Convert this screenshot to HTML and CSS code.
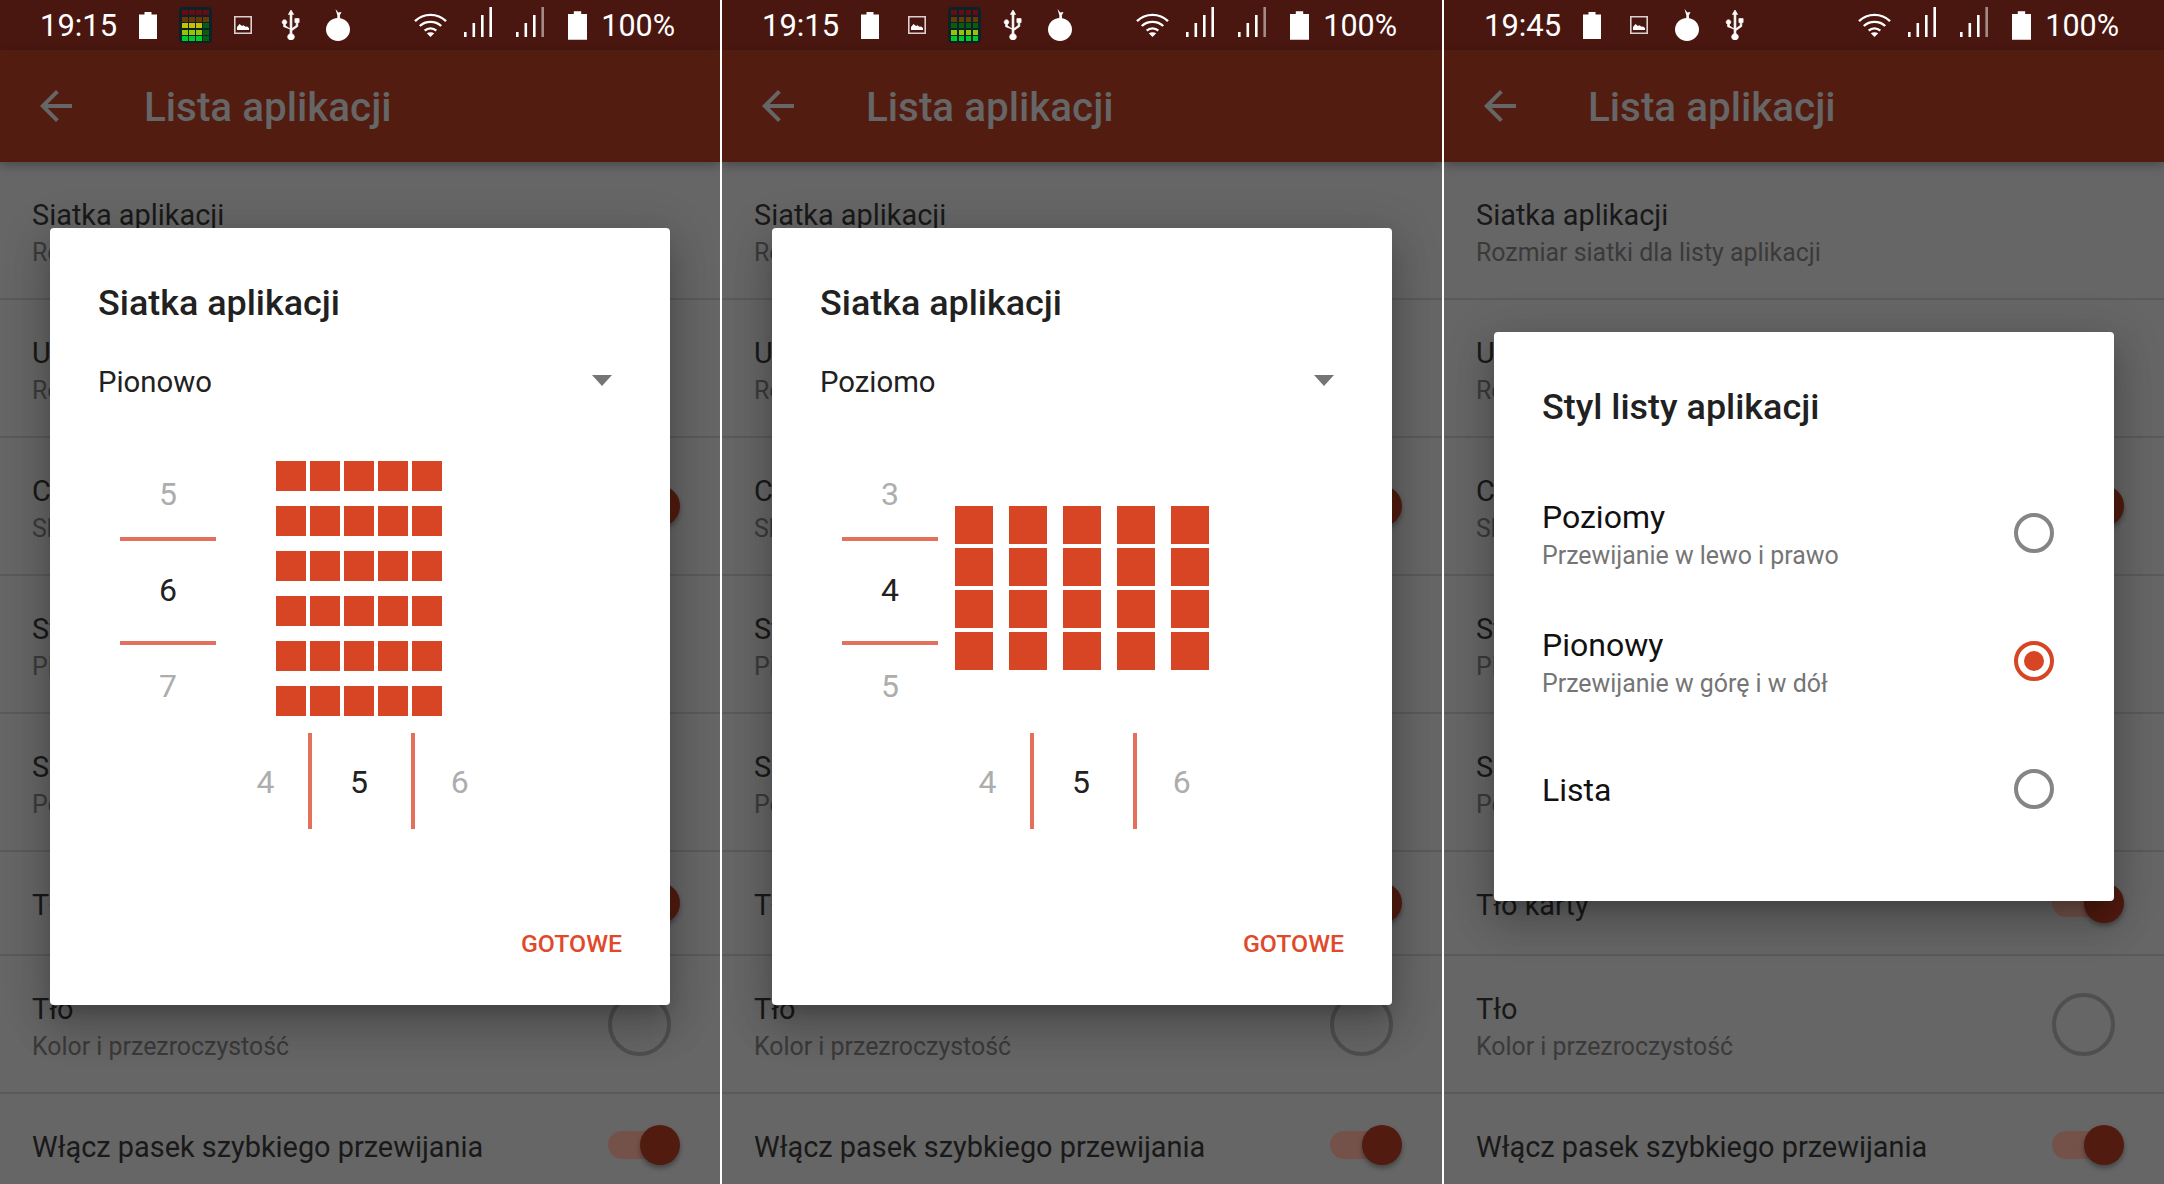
FILE: index.html
```html
<!doctype html>
<html lang="pl">
  <head>
    <meta charset="utf-8">
    <title>Lista aplikacji</title>
    <link rel="stylesheet" href="styles.css">
  </head>
  <body>
    <svg class="sprite" width="0" height="0" aria-hidden="true">
      <symbol id="i-battery" viewBox="0 0 18 27">
        <path d="M5.5 0h7v2.5H18V27H0V2.5h5.5z"/>
      </symbol>
      <symbol id="i-image" viewBox="0 0 18 18">
        <path opacity="0.8" fill-rule="evenodd" d="M0 0h18v18H0zM1.6 1.6v14.8h14.8V1.6z"/>
        <path d="M3 14v-3l2.5-3 2.500 2 1.500-.8 2 1.600 1.600-.4L15 12v2z"/>
      </symbol>
      <symbol id="i-usb" viewBox="0 0 20 30">
        <path d="M10 0l2.600 4.400h-1.700v14.200l4.300-3.100v-3h-1.300V8.600h4.200v3.900h-1.300v3.900l-5.900 4.200v3.100a3.300 3.300 0 1 1-1.800 0v-4.700L2.600 16.700v-2.500a2.300 2.300 0 1 1 1.800 0v1.600l4.700 3.200V4.400H7.400z"/>
      </symbol>
      <symbol id="i-fruit" viewBox="0 0 24 32">
        <path d="M12 9c7 0 12 5.400 12 11.600S18.600 32 12 32 0 26.800 0 20.600 5 9 12 9z"/>
        <path d="M9.500 0l2.800 3.600L15.500 3l-1.700 3.500.4 3h-3l.2-3z"/>
      </symbol>
      <symbol id="i-wifi" viewBox="0 0 33 24">
        <path fill="none" stroke="#fff" stroke-width="2.400" d="M1 8.200C9.500-.2 23.500-.2 32 8.200M5.800 13C11.500 7.500 21.500 7.500 27.200 13M10.700 17.600c3.200-3 8.400-3 11.600 0"/>
        <path d="M12.800 20.200c2-1.300 5.400-1.300 7.400 0l-3.700 3.800z"/>
      </symbol>
      <symbol id="i-signal" viewBox="0 0 28 30">
        <path d="M0 25h2.600v5H0zM8.500 16h2.600v14H8.500zM17 8h2.600v22H17z"/>
        <path d="M25.400 0H28v30h-2.600z"/>
      </symbol>
      <symbol id="i-signal-dim" viewBox="0 0 28 30">
        <path d="M0 25h2.600v5H0zM8.500 16h2.600v14H8.500zM17 8h2.600v22H17z"/>
        <path opacity="0.5" d="M25.400 0H28v30h-2.600z"/>
      </symbol>
      <symbol id="i-back" viewBox="0 0 24 24">
        <path d="M20 11H7.830l5.590-5.590L12 4l-8 8 8 8 1.410-1.410L7.830 13H20v-2z"/>
      </symbol>
    </svg>

    <section class="phone">
      <div class="status">
        <span class="clock">19:15</span>
        <div class="notifs">
          <span class="slot"><svg class="ic-battery"><use href="#i-battery"/></svg></span>
          <span class="slot">
            <span class="meter">
              <i class="m-red"></i><i class="m-red"></i><i class="m-red"></i><i class="m-red"></i>
              <i class="m-brown"></i><i class="m-brown"></i><i class="m-brown"></i><i class="m-brown"></i>
              <i class="m-yellow"></i><i class="m-yellow"></i><i class="m-yellow"></i><i class="m-dkgreen"></i>
              <i class="m-lime"></i><i class="m-lime"></i><i class="m-lime"></i><i class="m-dkgreen"></i>
              <i class="m-green"></i><i class="m-green"></i><i class="m-green"></i><i class="m-dkgreen"></i>
            </span>
          </span>
          <span class="slot"><svg class="ic-image"><use href="#i-image"/></svg></span>
          <span class="slot"><svg class="ic-usb"><use href="#i-usb"/></svg></span>
          <span class="slot"><svg class="ic-fruit"><use href="#i-fruit"/></svg></span>
        </div>
        <div class="system">
          <svg class="ic-wifi"><use href="#i-wifi"/></svg>
          <svg class="ic-signal"><use href="#i-signal"/></svg>
          <svg class="ic-signal"><use href="#i-signal-dim"/></svg>
          <svg class="ic-battery-sys"><use href="#i-battery"/></svg>
          <span class="level">100%</span>
        </div>
      </div>
      <header class="appbar">
        <svg class="ic-back"><use href="#i-back"/></svg>
        <h1>Lista aplikacji</h1>
      </header>
      <ul class="prefs">
        <li class="pref"><div class="pref-text"><b>Siatka aplikacji</b><small>Rozmiar siatki dla listy aplikacji</small></div></li>
        <li class="pref"><div class="pref-text"><b>Układ</b><small>Rozmiar</small></div></li>
        <li class="pref"><div class="pref-text"><b>Czcionka</b><small>Skala</small></div><span class="switch"></span></li>
        <li class="pref"><div class="pref-text"><b>Styl listy aplikacji</b><small>Pionowy</small></div></li>
        <li class="pref"><div class="pref-text"><b>Sortowanie</b><small>Po nazwie</small></div></li>
        <li class="pref pref-short"><div class="pref-text"><b>Tło karty</b></div><span class="switch"></span></li>
        <li class="pref"><div class="pref-text"><b>Tło</b><small>Kolor i przezroczystość</small></div><span class="swatch"></span></li>
        <li class="pref pref-short"><div class="pref-text"><b>Włącz pasek szybkiego przewijania</b></div><span class="switch"></span></li>
      </ul>

      <div class="dialog dialog-grid">
        <h2>Siatka aplikacji</h2>
        <div class="dropdown"><span>Pionowo</span><span class="caret"></span></div>
        <div class="editor">
          <div class="vpick">
            <span class="n-top dim">5</span>
            <span class="n-mid">6</span>
            <span class="n-bot dim">7</span>
          </div>
          <div class="preview">
            <div class="cells cells-portrait">
              <i></i><i></i><i></i><i></i><i></i>
              <i></i><i></i><i></i><i></i><i></i>
              <i></i><i></i><i></i><i></i><i></i>
              <i></i><i></i><i></i><i></i><i></i>
              <i></i><i></i><i></i><i></i><i></i>
              <i></i><i></i><i></i><i></i><i></i>
            </div>
          </div>
          <div class="hpick">
            <span class="h-left dim">4</span>
            <span class="h-mid">5</span>
            <span class="h-right dim">6</span>
          </div>
        </div>
        <div class="actions"><span>GOTOWE</span></div>
      </div>
    </section>

    <section class="phone">
      <div class="status">
        <span class="clock">19:15</span>
        <div class="notifs">
          <span class="slot"><svg class="ic-battery"><use href="#i-battery"/></svg></span>
          <span class="slot"><svg class="ic-image"><use href="#i-image"/></svg></span>
          <span class="slot">
            <span class="meter">
              <i class="m-red"></i><i class="m-red"></i><i class="m-red"></i><i class="m-red"></i>
              <i class="m-brown"></i><i class="m-brown"></i><i class="m-brown"></i><i class="m-brown"></i>
              <i class="m-dkgreen"></i><i class="m-dkgreen"></i><i class="m-dkgreen"></i><i class="m-dkgreen"></i>
              <i class="m-lime"></i><i class="m-lime"></i><i class="m-lime"></i><i class="m-lime"></i>
              <i class="m-green"></i><i class="m-green"></i><i class="m-green"></i><i class="m-green"></i>
            </span>
          </span>
          <span class="slot"><svg class="ic-usb"><use href="#i-usb"/></svg></span>
          <span class="slot"><svg class="ic-fruit"><use href="#i-fruit"/></svg></span>
        </div>
        <div class="system">
          <svg class="ic-wifi"><use href="#i-wifi"/></svg>
          <svg class="ic-signal"><use href="#i-signal"/></svg>
          <svg class="ic-signal"><use href="#i-signal-dim"/></svg>
          <svg class="ic-battery-sys"><use href="#i-battery"/></svg>
          <span class="level">100%</span>
        </div>
      </div>
      <header class="appbar">
        <svg class="ic-back"><use href="#i-back"/></svg>
        <h1>Lista aplikacji</h1>
      </header>
      <ul class="prefs">
        <li class="pref"><div class="pref-text"><b>Siatka aplikacji</b><small>Rozmiar siatki dla listy aplikacji</small></div></li>
        <li class="pref"><div class="pref-text"><b>Układ</b><small>Rozmiar</small></div></li>
        <li class="pref"><div class="pref-text"><b>Czcionka</b><small>Skala</small></div><span class="switch"></span></li>
        <li class="pref"><div class="pref-text"><b>Styl listy aplikacji</b><small>Pionowy</small></div></li>
        <li class="pref"><div class="pref-text"><b>Sortowanie</b><small>Po nazwie</small></div></li>
        <li class="pref pref-short"><div class="pref-text"><b>Tło karty</b></div><span class="switch"></span></li>
        <li class="pref"><div class="pref-text"><b>Tło</b><small>Kolor i przezroczystość</small></div><span class="swatch"></span></li>
        <li class="pref pref-short"><div class="pref-text"><b>Włącz pasek szybkiego przewijania</b></div><span class="switch"></span></li>
      </ul>

      <div class="dialog dialog-grid">
        <h2>Siatka aplikacji</h2>
        <div class="dropdown"><span>Poziomo</span><span class="caret"></span></div>
        <div class="editor">
          <div class="vpick">
            <span class="n-top dim">3</span>
            <span class="n-mid">4</span>
            <span class="n-bot dim">5</span>
          </div>
          <div class="preview">
            <div class="cells cells-landscape">
              <i></i><i></i><i></i><i></i><i></i>
              <i></i><i></i><i></i><i></i><i></i>
              <i></i><i></i><i></i><i></i><i></i>
              <i></i><i></i><i></i><i></i><i></i>
            </div>
          </div>
          <div class="hpick">
            <span class="h-left dim">4</span>
            <span class="h-mid">5</span>
            <span class="h-right dim">6</span>
          </div>
        </div>
        <div class="actions"><span>GOTOWE</span></div>
      </div>
    </section>

    <section class="phone">
      <div class="status">
        <span class="clock">19:45</span>
        <div class="notifs">
          <span class="slot"><svg class="ic-battery"><use href="#i-battery"/></svg></span>
          <span class="slot"><svg class="ic-image"><use href="#i-image"/></svg></span>
          <span class="slot"><svg class="ic-fruit"><use href="#i-fruit"/></svg></span>
          <span class="slot"><svg class="ic-usb"><use href="#i-usb"/></svg></span>
        </div>
        <div class="system">
          <svg class="ic-wifi"><use href="#i-wifi"/></svg>
          <svg class="ic-signal"><use href="#i-signal"/></svg>
          <svg class="ic-signal"><use href="#i-signal-dim"/></svg>
          <svg class="ic-battery-sys"><use href="#i-battery"/></svg>
          <span class="level">100%</span>
        </div>
      </div>
      <header class="appbar">
        <svg class="ic-back"><use href="#i-back"/></svg>
        <h1>Lista aplikacji</h1>
      </header>
      <ul class="prefs">
        <li class="pref"><div class="pref-text"><b>Siatka aplikacji</b><small>Rozmiar siatki dla listy aplikacji</small></div></li>
        <li class="pref"><div class="pref-text"><b>Układ</b><small>Rozmiar</small></div></li>
        <li class="pref"><div class="pref-text"><b>Czcionka</b><small>Skala</small></div><span class="switch"></span></li>
        <li class="pref"><div class="pref-text"><b>Styl listy aplikacji</b><small>Pionowy</small></div></li>
        <li class="pref"><div class="pref-text"><b>Sortowanie</b><small>Po nazwie</small></div></li>
        <li class="pref pref-short"><div class="pref-text"><b>Tło karty</b></div><span class="switch"></span></li>
        <li class="pref"><div class="pref-text"><b>Tło</b><small>Kolor i przezroczystość</small></div><span class="swatch"></span></li>
        <li class="pref pref-short"><div class="pref-text"><b>Włącz pasek szybkiego przewijania</b></div><span class="switch"></span></li>
      </ul>

      <div class="dialog dialog-style">
        <h2>Styl listy aplikacji</h2>
        <div class="option">
          <div class="option-text"><b>Poziomy</b><small>Przewijanie w lewo i prawo</small></div>
          <span class="radio"></span>
        </div>
        <div class="option">
          <div class="option-text"><b>Pionowy</b><small>Przewijanie w górę i w dół</small></div>
          <span class="radio radio-on"></span>
        </div>
        <div class="option">
          <div class="option-text option-single"><b>Lista</b></div>
          <span class="radio"></span>
        </div>
      </div>
    </section>
  </body>
</html>
```

FILE: styles.css
```css
:root {
  --accent: #d84525;
  --line: #e2705a;
  --scrim: #666666;
  --status: #4a1710;
  --appbar: #521c11;
  --knob: #521b0f;
}

* {
  box-sizing: border-box;
}

html,
body {
  margin: 0;
  height: 100%;
}

body {
  display: flex;
  gap: 2px;
  width: 2164px;
  height: 1184px;
  overflow: hidden;
  background: #fff;
  font-family: Roboto, "Noto Sans", sans-serif;
}

.sprite {
  position: absolute;
}

.phone {
  position: relative;
  width: 720px;
  height: 1184px;
  overflow: hidden;
  background: var(--scrim);
}

/* status bar */
.status {
  display: flex;
  align-items: center;
  height: 50px;
  padding: 0 45px 0 40px;
  background: var(--status);
  color: #fff;
  fill: #fff;
  font-size: 31px;
}

.clock {
  width: 84px;
}

.notifs {
  display: flex;
  align-items: center;
}

.slot {
  display: flex;
  justify-content: center;
  align-items: center;
  width: 47.6px;
}

.system {
  display: flex;
  align-items: center;
  margin-left: auto;
}

.level {
  font-size: 30.5px;
}

.ic-battery {
  width: 18px;
  height: 27px;
  margin-top: 1px;
}

.ic-image {
  width: 18px;
  height: 18px;
}

.ic-usb {
  width: 20px;
  height: 30px;
  stroke: #fff;
  stroke-width: 0.7;
}

.ic-fruit {
  width: 24px;
  height: 32px;
}

.ic-wifi {
  width: 33px;
  height: 24px;
  margin-right: 17px;
}

.ic-signal {
  width: 28px;
  height: 30px;
  margin: 0 24px 6px 0;
}

.ic-battery-sys {
  width: 19px;
  height: 29px;
  margin-right: 14px;
}

.meter {
  display: grid;
  grid-template-columns: repeat(4, 1fr);
  grid-template-rows: repeat(5, 5px);
  gap: 1.5px;
  width: 33px;
  height: 36px;
  padding: 3px;
  border-radius: 4px;
  background: #0c2229;
}

.m-red {
  background: #6b0a10;
}

.m-brown {
  background: #6a3806;
}

.m-yellow {
  background: #c8c000;
}

.m-dkgreen {
  background: #075e0e;
}

.m-lime {
  background: #8fc800;
}

.m-green {
  background: #05c92a;
}

/* app bar */
.appbar {
  display: flex;
  align-items: center;
  height: 112px;
  padding-left: 32px;
  background: var(--appbar);
  box-shadow: 0 3px 10px rgba(0, 0, 0, 0.3);
  position: relative;
  fill: var(--scrim);
}

.ic-back {
  width: 48px;
  height: 48px;
}

.appbar h1 {
  margin: 0 0 0 64px;
  padding-top: 3px;
  color: var(--scrim);
  font-size: 40.4px;
  font-weight: 500;
}

/* preference list */
.prefs {
  margin: 0;
  padding: 0;
  list-style: none;
}

.pref {
  display: flex;
  align-items: center;
  justify-content: space-between;
  height: 138px;
  padding: 0 32px;
  border-bottom: 2px solid #5a5a5a;
}

.pref-short {
  height: 104px;
}

.pref-text {
  padding-top: 6px;
}

.pref-short .pref-text {
  padding-top: 3px;
}

.pref-text b {
  display: block;
  color: #191919;
  font-size: 28.9px;
  font-weight: 400;
  line-height: 40px;
}

.pref-text small {
  display: block;
  color: #3a3a3a;
  font-size: 24.9px;
  line-height: 36px;
}

.switch {
  position: relative;
  flex: none;
  width: 68px;
  height: 28px;
  margin-right: 12px;
  border-radius: 14px;
  background: #745249;
}

.switch::after {
  content: "";
  position: absolute;
  top: -6px;
  right: -4px;
  width: 40px;
  height: 40px;
  border-radius: 50%;
  background: var(--knob);
  box-shadow: 0 3px 5px rgba(0, 0, 0, 0.35);
}

.swatch {
  flex: none;
  width: 63px;
  height: 63px;
  margin-right: 17px;
  border: 4px solid #4f4f4f;
  border-radius: 50%;
}

/* dialogs */
.dialog {
  position: absolute;
  left: 50px;
  width: 620px;
  border-radius: 4px;
  background: #fff;
  box-shadow:
    0 24px 38px 3px rgba(0, 0, 0, 0.14),
    0 9px 46px 8px rgba(0, 0, 0, 0.12),
    0 11px 15px -7px rgba(0, 0, 0, 0.2);
}

.dialog h2 {
  margin: 0;
  padding-left: 48px;
  color: #212121;
  font-size: 35.9px;
  font-weight: 500;
  line-height: 48px;
}

.dialog-grid {
  top: 228px;
  display: flex;
  flex-direction: column;
  height: 777px;
  padding-top: 51px;
}

.dropdown {
  display: flex;
  align-items: center;
  justify-content: space-between;
  height: 40px;
  margin-top: 35px;
  padding: 0 58px 0 48px;
  color: #212121;
  font-size: 29.3px;
}

.caret {
  width: 0;
  height: 0;
  margin-top: -3px;
  border-top: 11px solid #757575;
  border-left: 10px solid transparent;
  border-right: 10px solid transparent;
}

.editor {
  display: grid;
  grid-template-columns: 96px 288px;
  margin: 47px 0 0 70px;
  color: #212121;
  font-size: 32px;
}

.dim {
  color: #adadad;
}

.vpick {
  display: flex;
  flex-direction: column;
  text-align: center;
}

.vpick span {
  display: flex;
  align-items: center;
  justify-content: center;
}

.n-top {
  height: 92px;
  padding-top: 2px;
  border-bottom: 4px solid var(--line);
}

.n-mid {
  height: 100px;
  padding-bottom: 2px;
}

.n-bot {
  height: 84px;
  padding-top: 1px;
  border-top: 4px solid var(--line);
}

.preview {
  display: flex;
  align-items: center;
  justify-content: center;
  padding: 2px 2px 0 0;
}

.cells {
  display: grid;
}

.cells i {
  background: var(--accent);
}

.cells-portrait {
  grid-template-columns: repeat(5, 30px);
  grid-auto-rows: 30px;
  gap: 15px 4px;
}

.cells-landscape {
  grid-template-columns: repeat(5, 38px);
  grid-auto-rows: 38px;
  gap: 4px 16px;
  margin-left: 2px;
}

.hpick {
  grid-column: 2;
  display: flex;
  align-items: center;
  height: 96px;
  margin-top: 8px;
  padding-left: 7px;
}

.hpick span {
  display: flex;
  align-items: center;
  justify-content: center;
  height: 100%;
  padding-top: 2px;
}

.h-left {
  width: 86px;
}

.h-mid {
  width: 109px;
  padding-right: 5px;
  border-left: 4px solid var(--line);
  border-right: 4px solid var(--line);
}

.h-right {
  width: 90px;
}

.actions {
  display: flex;
  justify-content: flex-end;
  margin-top: auto;
  padding: 0 48px 43px 0;
  color: #e0492a;
  font-size: 24.8px;
  font-weight: 500;
  line-height: 36px;
}

.dialog-style {
  top: 332px;
  height: 569px;
  padding-top: 51px;
}

.dialog-style h2 {
  margin-bottom: 38px;
}

.option {
  display: flex;
  align-items: center;
  justify-content: space-between;
  height: 128px;
  padding: 0 60px 0 48px;
}

.option-text {
  padding-top: 6px;
}

.option-single {
  padding-top: 1px;
}

.option-text b {
  display: block;
  color: #111111;
  font-size: 32px;
  font-weight: 400;
  line-height: 40px;
}

.option-text small {
  display: block;
  color: #757575;
  font-size: 24.9px;
  line-height: 38px;
}

.radio {
  display: flex;
  align-items: center;
  justify-content: center;
  flex: none;
  width: 40px;
  height: 40px;
  border: 4px solid #858585;
  border-radius: 50%;
}

.radio-on {
  border-color: var(--accent);
}

.radio-on::after {
  content: "";
  width: 20px;
  height: 20px;
  border-radius: 50%;
  background: var(--accent);
}
```
